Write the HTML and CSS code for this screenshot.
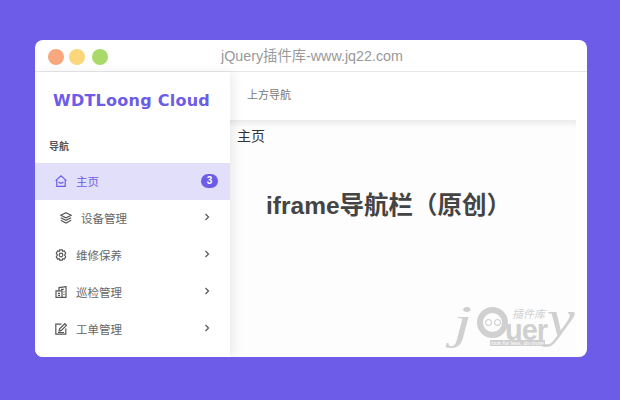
FILE: index.html
```html
<!DOCTYPE html>
<html lang="zh-CN">
<head>
    <meta charset="UTF-8">
    <title>iframe导航栏</title>
    <link rel="stylesheet" href="styles.css">
</head>
<body>
    <div class="window">
        <div class="titlebar">
            <div class="dots">
                <span class="dot dot-red"></span>
                <span class="dot dot-yellow"></span>
                <span class="dot dot-green"></span>
            </div>
            <div class="site-title">jQuery插件库-www.jq22.com</div>
        </div>
        <div class="app">
            <div class="sidebar">
                <div class="logo">WDTLoong Cloud</div>
                <div class="nav-label">导航</div>
                <a class="nav-item active">
                    <svg class="nav-icon" viewBox="0 0 12 12"><path d="M.6 5.600 6 .8l5.400 4.800M1.800 4.600v6.800h8.400V4.600M3.700 7c1.300 1.400 3.300 1.400 4.600 0"/></svg>
                    <span class="nav-text">主页</span>
                    <span class="badge">3</span>
                </a>
                <a class="nav-item indent">
                    <svg class="nav-icon" viewBox="0 0 12 12"><path d="M6 .7 11.300 3.300 6 5.900.7 3.300zM.8 5.800 6 8.400l5.200-2.600M.8 8.300 6 11l5.200-2.700"/></svg>
                    <span class="nav-text">设备管理</span>
                    <svg class="chevron" viewBox="0 0 6 8"><path d="M1.500 1 4.500 4 1.500 7"/></svg>
                </a>
                <a class="nav-item">
                    <svg class="nav-icon" viewBox="0 0 12 12"><path d="M4.700.8h2.600l.5 1.500 1.600-.3 1.300 2.200L9.600 6l1.100 1.800-1.300 2.200-1.600-.3-.5 1.500H4.700l-.5-1.500-1.600.3-1.300-2.200L2.400 6 1.300 4.200 2.600 2l1.600.3z"/><circle cx="6" cy="6" r="1.800"/></svg>
                    <span class="nav-text">维修保养</span>
                    <svg class="chevron" viewBox="0 0 6 8"><path d="M1.500 1 4.500 4 1.500 7"/></svg>
                </a>
                <a class="nav-item">
                    <svg class="nav-icon" viewBox="0 0 12 12"><path d="M4 4.800V1.600L11 .7v10.700H1V4.800h6v6.600M3 7.300h2M3 9.300h2M6 3.300h2.800M9 5.500v1M9 8v1"/></svg>
                    <span class="nav-text">巡检管理</span>
                    <svg class="chevron" viewBox="0 0 6 8"><path d="M1.500 1 4.500 4 1.500 7"/></svg>
                </a>
                <a class="nav-item">
                    <svg class="nav-icon" viewBox="0 0 12 12"><path d="M6.500 1.200H.8v10h10V5.500M4.200 7.900l.4-2.200L9.800.7l1.600 1.600-5 5.100zM3 9.500h6"/></svg>
                    <span class="nav-text">工单管理</span>
                    <svg class="chevron" viewBox="0 0 6 8"><path d="M1.500 1 4.500 4 1.500 7"/></svg>
                </a>
            </div>
            <div class="content">
                <div class="topnav">上方导航</div>
                <div class="page">
                    <div class="page-name">主页</div>
                    <h1>iframe导航栏（原创）</h1>
                </div>
            </div>
            <div class="watermark">
                <span class="wm-j">j</span>
                <span class="wm-q"><i class="eye"></i><i class="eye"></i></span>
                <span class="wm-uer">uer</span>
                <span class="wm-y">y</span>
                <span class="wm-cn">插件库</span>
                <span class="wm-tag">look for less, do more</span>
            </div>
        </div>
    </div>
</body>
</html>
```

FILE: styles.css
```css
html, body {
    margin: 0;
    height: 100%;
}
body {
    background-color: #6c5ce7;
    font-family: "Liberation Sans", "Noto Sans CJK SC", sans-serif;
    padding: 40px 33px 43px 35px;
    box-sizing: border-box;
}
.window {
    height: 317px;
    background: white;
    border-radius: 8px;
    overflow: hidden;
    display: flex;
    flex-direction: column;
}
.titlebar {
    height: 31px;
    flex-shrink: 0;
    border-bottom: 1px solid #e8e8e8;
    display: flex;
    align-items: center;
    position: relative;
}
.dots {
    display: flex;
    gap: 5px;
    padding: 3px 0 0 13px;
}
.dot {
    width: 16px;
    height: 16px;
    border-radius: 50%;
}
.dot-red { background-color: #f9a77c; }
.dot-yellow { background-color: #fbd67a; }
.dot-green { background-color: #a9da68; margin-left: 2px; }
.site-title {
    position: absolute;
    left: 186px;
    top: 6px;
    font-size: 14.300px;
    line-height: 20px;
    color: #999;
}
.app {
    flex: 1;
    display: flex;
    position: relative;
    min-height: 0;
}
.sidebar {
    width: 195px;
    flex-shrink: 0;
    position: relative;
    z-index: 2;
    background: white;
    box-shadow: 4px 0 10px rgba(0,0,0,0.07);
}
.logo {
    font-family: "DejaVu Sans", sans-serif;
    font-weight: bold;
    font-size: 16px;
    line-height: 22px;
    letter-spacing: 0.25px;
    color: #6c5ce7;
    padding: 18px 0 0 18px;
}
.nav-label {
    font-size: 10px;
    font-weight: bold;
    line-height: 14px;
    color: #555;
    padding: 28px 0 9px 14px;
}
.nav-item {
    height: 37px;
    display: flex;
    align-items: center;
    padding: 0 12px 0 20px;
    font-size: 11.500px;
    color: #666;
}
.nav-item.indent {
    padding-left: 25px;
}
.nav-item.active {
    background-color: #e2dffb;
    color: #6c5ce7;
}
.nav-icon {
    width: 12px;
    height: 12px;
    margin: 0 9px 2px 0;
    fill: none;
    stroke: #555;
    stroke-width: 1.200;
}
.active .nav-icon {
    stroke: #6c5ce7;
}
.nav-text {
    flex: 1;
    padding-bottom: 1px;
}
.badge {
    width: 17px;
    height: 14px;
    border-radius: 7px;
    background-color: #6c5ce7;
    color: white;
    font-size: 10px;
    font-weight: bold;
    line-height: 14px;
    text-align: center;
    margin-bottom: 1px;
}
.chevron {
    width: 6px;
    height: 8px;
    margin: 0 8px 4px 0;
    fill: none;
    stroke: #555;
    stroke-width: 1.200;
}
.content {
    flex: 1;
    min-width: 0;
    display: flex;
    flex-direction: column;
}
.topnav {
    height: 48px;
    flex-shrink: 0;
    padding-left: 17px;
    font-size: 11px;
    line-height: 46px;
    color: #777;
}
.page {
    flex: 1;
    margin-right: 11px;
    background: #fdfdfd;
    padding: 6px 0 0 7px;
    box-shadow: inset 0 7px 6px -4px rgba(0,0,0,0.09);
}
.page-name {
    font-size: 14px;
    line-height: 20px;
    color: #333;
}
h1 {
    margin: 0;
    padding: 42px 0 0 29px;
    font-size: 24.500px;
    line-height: 36px;
    font-weight: bold;
    color: #444;
}
.watermark {
    position: absolute;
    right: 10px;
    bottom: 8px;
    width: 128px;
    height: 50px;
    color: #d0d0d0;
}
.watermark span {
    position: absolute;
}
.wm-j {
    left: 4px;
    top: 1px;
    font-family: "Liberation Serif", serif;
    font-style: italic;
    font-size: 46px;
    line-height: 46px;
    transform: scaleX(1.500);
    transform-origin: left;
}
.wm-q {
    left: 28px;
    top: 8px;
    width: 31px;
    height: 31px;
    border: 6px solid #d0d0d0;
    border-radius: 50%;
    box-sizing: border-box;
    display: flex;
    justify-content: center;
    align-items: center;
    gap: 2px;
}
.eye {
    width: 7px;
    height: 7px;
    border: 1.500px solid #c4c4c4;
    border-radius: 50%;
    box-sizing: border-box;
}
.wm-uer {
    left: 56px;
    top: 22px;
    font-size: 29px;
    line-height: 18px;
    letter-spacing: -1px;
    font-weight: bold;
}
.wm-y {
    left: 98px;
    top: -6px;
    font-family: "Liberation Serif", serif;
    font-style: italic;
    font-size: 52px;
    line-height: 52px;
    transform: scaleX(1.200);
    transform-origin: left;
}
.wm-cn {
    left: 63px;
    top: 8px;
    font-style: italic;
    font-size: 11px;
    line-height: 14px;
}
.wm-tag {
    left: 41px;
    top: 41px;
    padding: 0 1px;
    background-color: #d0d0d0;
    color: white;
    font-size: 5.500px;
    line-height: 6px;
    font-style: italic;
    white-space: nowrap;
}
```
